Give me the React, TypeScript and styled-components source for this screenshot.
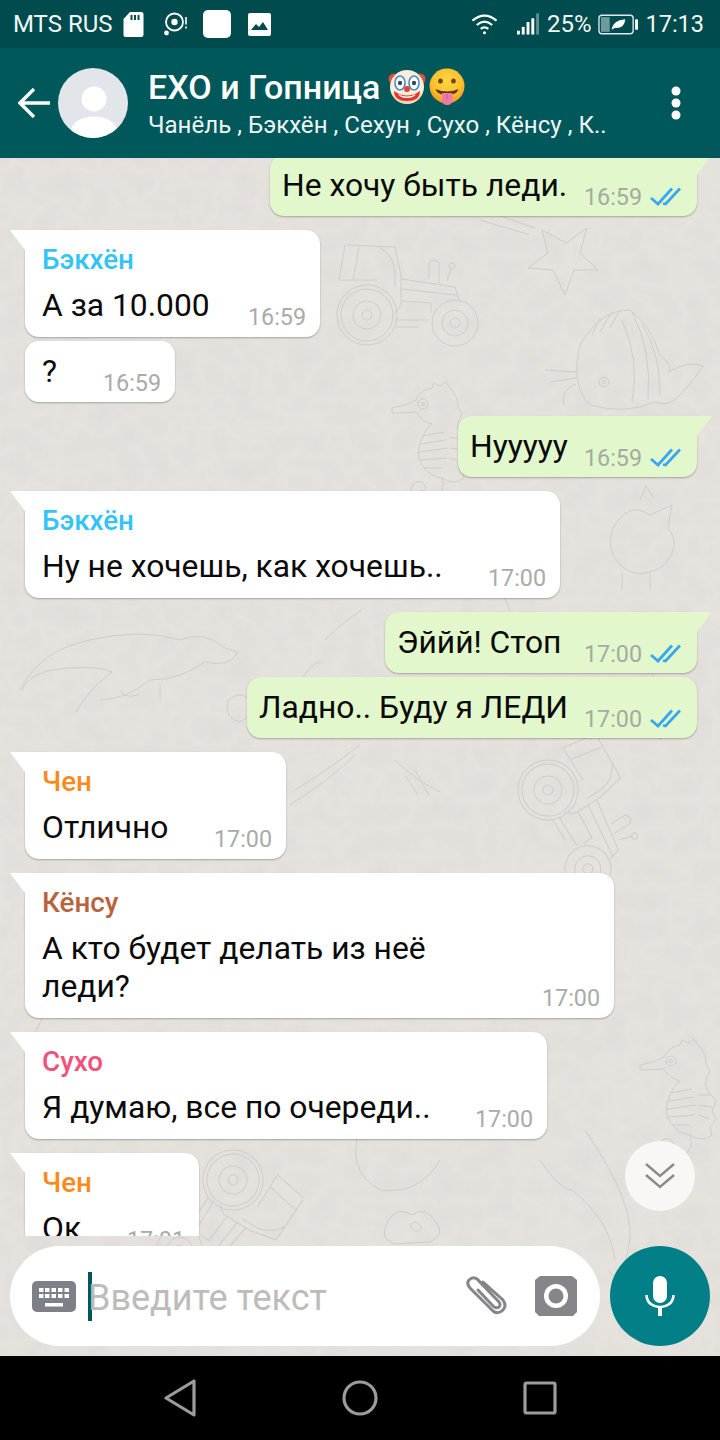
import React from 'react';
import styled, { createGlobalStyle } from 'styled-components';

const GlobalStyle = createGlobalStyle`
  html, body {
    margin: 0;
    padding: 0;
    background: #000;
  }
  * {
    box-sizing: border-box;
  }
`

const Phone = styled.div`
  width: 720px;
  height: 1440px;
  display: flex;
  flex-direction: column;
  overflow: hidden;
  font-family: Roboto, "Noto Sans", sans-serif;
`

const StatusBar = styled.div`
  height: 48px;
  flex: none;
  padding: 0 16px 0 13px;
  display: flex;
  align-items: center;
  background: #004b4d;
  color: #f2f7f7;
  font-size: 24px;
`

const StatusGroup = styled.div`
  display: flex;
  align-items: center;
`

const Spacer = styled.div`
  flex: 1;
`

const Header = styled.div`
  height: 110px;
  flex: none;
  padding: 0 39px 0 18px;
  display: flex;
  align-items: center;
  background: #00585a;
  color: #fff;
`

const Avatar = styled.div`
  width: 70px;
  height: 70px;
  flex: none;
  margin-left: 8px;
  border-radius: 50%;
  overflow: hidden;
  background: #e2e5ea;
`

const HeaderText = styled.div`
  margin-left: 20px;
  flex: 1;
  min-width: 0;
`

const Title = styled.div`
  display: flex;
  align-items: center;
  height: 44px;
  margin-top: -1px;
  font-size: 34px;
  font-weight: 500;
  white-space: nowrap;

  svg {
    flex: none;
  }
`

const Subtitle = styled.div`
  margin-top: 1px;
  font-size: 24.1px;
  line-height: 30px;
  color: #eef5f5;
  white-space: nowrap;
`

const ChatArea = styled.div`
  position: relative;
  flex: 1;
  min-height: 0;
  display: flex;
  flex-direction: column;
  background: #e6e2de;
`

const Wallpaper = styled.svg`
  position: absolute;
  left: 0;
  top: 0;
`

const MessageList = styled.div`
  position: relative;
  height: 1078px;
  flex: none;
  overflow: hidden;
  display: flex;
  flex-direction: column;
  padding: 0 23px 0 25px;
`

const Bubble = styled.div<{ $out?: boolean; $tail?: boolean; $named?: boolean; $width: number; $gap?: number }>`
  position: relative;
  flex: none;
  width: ${p => p.$width}px;
  margin-top: ${p => p.$gap ?? 14}px;
  align-self: ${p => (p.$out ? 'flex-end' : 'flex-start')};
  padding: ${p => (p.$named ? '14px 14px 13px 17px' : p.$out ? '11px 16px 12px 12px' : '11px 14px 12px 17px')};
  background: ${p => (p.$out ? '#e2f7cb' : '#fff')};
  border-radius: ${p => (!p.$tail ? '14px' : p.$out ? '14px 0 14px 14px' : '0 14px 14px 14px')};
  box-shadow: 0 1px 2px rgba(0, 0, 0, 0.28);

  &::before {
    content: '';
    display: ${p => (p.$tail ? 'block' : 'none')};
    position: absolute;
    top: 0;
    ${p => (p.$out ? 'right: -15px;' : 'left: -15px;')}
    width: 15px;
    height: 20px;
    background: ${p => (p.$out ? '#e2f7cb' : '#fff')};
    clip-path: ${p => (p.$out ? 'polygon(0 0, 100% 0, 0 100%)' : 'polygon(0 0, 100% 0, 100% 100%)')};
  }
`

const SenderName = styled.div<{ $color: string }>`
  height: 30px;
  margin-bottom: 12px;
  font-size: 27.8px;
  line-height: 32px;
  font-weight: 500;
  color: ${p => p.$color};
`

const BubbleBody = styled.div`
  display: flex;
  align-items: flex-end;
  justify-content: space-between;
`

const MessageText = styled.div`
  font-size: 31.8px;
  line-height: 38px;
  color: #0a0a0a;
`

const Meta = styled.div<{ $out?: boolean }>`
  flex: none;
  display: flex;
  align-items: center;
  height: 28px;
  margin-bottom: -7px;
  font-size: 23.3px;
  color: ${p => (p.$out ? '#a2aca0' : '#a9abab')};
`

const Ticks = styled.svg`
  margin-left: 8px;
  margin-top: -2px;
`

const ScrollDown = styled.div`
  position: absolute;
  left: 625px;
  top: 983px;
  width: 70px;
  height: 70px;
  border-radius: 50%;
  display: flex;
  align-items: center;
  justify-content: center;
  background: #faf6f5;
`

const Composer = styled.div`
  position: relative;
  flex: none;
  display: flex;
  gap: 10px;
  padding: 10px;
`

const InputPill = styled.div`
  width: 590px;
  height: 100px;
  flex: none;
  padding: 0 23px 0 22px;
  display: flex;
  align-items: center;
  border-radius: 50px;
  background: #fff;
`

const Caret = styled.div`
  width: 4px;
  height: 49px;
  flex: none;
  margin: 0 -4px 0 12px;
  background: #00585a;
`

const Placeholder = styled.div`
  flex: 1;
  padding-top: 3px;
  font-size: 36px;
  color: #bebbbb;
  white-space: nowrap;
`

const MicButton = styled.div`
  width: 100px;
  height: 100px;
  flex: none;
  border-radius: 50%;
  display: flex;
  align-items: center;
  justify-content: center;
  background: #008086;
`

const NavBar = styled.div`
  height: 84px;
  flex: none;
  display: flex;
  align-items: center;
  justify-content: space-between;
  padding: 0 163px;
  background: #000;
`

const ClownEmoji = () => (
  <svg width="38" height="36" viewBox="0 0 38 36" style={{ marginLeft: 8 }}>
    <circle cx="6" cy="10" r="5.5" fill="#e2503a" />
    <circle cx="32" cy="10" r="5.5" fill="#e2503a" />
    <circle cx="19" cy="18" r="17" fill="#fbeedb" />
    <path d="M3 22 Q6 34 19 35 Q32 34 35 22 Q30 30 19 30 Q8 30 3 22Z" fill="#f3c89a" opacity="0.6" />
    <ellipse cx="12" cy="14" rx="5" ry="7" fill="#fff" stroke="#4c8ccc" strokeWidth="1.6" />
    <ellipse cx="26" cy="14" rx="5" ry="7" fill="#fff" stroke="#4c8ccc" strokeWidth="1.6" />
    <circle cx="12" cy="14" r="2.2" fill="#35495f" />
    <circle cx="26" cy="14" r="2.2" fill="#35495f" />
    <circle cx="19" cy="20" r="3" fill="#e8402c" />
    <path d="M6 22 Q19 31 32 22 Q32 32 19 32 Q6 32 6 22Z" fill="#e5352b" />
    <path d="M10 25 Q19 30 28 25 Q26 29 19 29 Q12 29 10 25Z" fill="#fff" />
  </svg>
)

const TongueEmoji = () => (
  <svg width="36" height="38" viewBox="0 0 36 38" style={{ marginLeft: 3 }}>
    <defs>
      <radialGradient id="faceFill" cx="0.5" cy="0.35" r="0.7">
        <stop offset="0" stopColor="#fed53f" />
        <stop offset="0.6" stopColor="#fcc02f" />
        <stop offset="1" stopColor="#ef8f1a" />
      </radialGradient>
    </defs>
    <circle cx="18" cy="18" r="17.5" fill="url(#faceFill)" />
    <ellipse cx="11.5" cy="13" rx="2.3" ry="2.6" fill="#70421a" />
    <ellipse cx="24.5" cy="13" rx="2.3" ry="2.6" fill="#70421a" />
    <path d="M6.5 21 Q18 26 29.5 21 Q28 27 18 27 Q8 27 6.5 21Z" fill="#5b3512" />
    <path d="M13 25 H23.5 V31 Q23.5 37 18 37 Q13 37 13 31Z" fill="#ef7aa8" />
    <path d="M18 26 V31" stroke="#d0528a" strokeWidth="1" />
  </svg>
)

const DoubleTicks = () => (
  <Ticks width="31" height="19" viewBox="0 0 31 19" fill="none" stroke="#38a8ec" strokeWidth="2.8">
    <path d="M1 11 L8 17 L22 1.5" />
    <path d="M13 16.5 L15.5 17 L30 1.5" />
  </Ticks>
)

// big wheel sits at the origin, front of the tractor points along +x
const Tractor = ({ at }: { at: string }) => (
  <g transform={at}>
    <circle r="30" />
    <circle r="26" />
    <circle r="14" />
    <circle r="5" />
    <circle cx="88" cy="8" r="23" />
    <circle cx="88" cy="8" r="13" />
    <circle cx="88" cy="8" r="5" />
    <path d="M-20 -70 L28 -68 L34 -40 L34 -10 M-22 -70 L-28 -35 M-8 -68 L-14 -35 M12 -68 Q28 -60 28 -40 L28 -28 M-28 -35 L10 -35" />
    <path d="M34 -36 L88 -28 L92 -15 M34 -26 L90 -20 M34 -14 L64 -12 V-2 M28 5 L62 5 M28 -2 L34 -10 M28 12 H52" />
    <path d="M62 -36 V-52 Q68 -58 72 -52 V-32 M80 -34 L84 -47" />
    <circle cx="85" cy="-49" r="3" />
  </g>
)

const Seahorse = ({ at }: { at: string }) => (
  <g transform={at}>
    <path d="M0 0 Q14 -2 24 -8 Q28 -18 40 -20 L42 -25 L48 -22 L54 -26 L58 -20 Q66 -12 66 -2 L70 6 L66 14 Q64 20 68 26 L76 36 L72 46 L76 54 L70 62 L72 70 Q62 78 50 70 Q54 84 44 90 Q30 96 22 88 Q16 78 24 74 Q32 72 34 80 Q32 84 28 82" />
    <path d="M0 0 L0 5 Q14 5 24 4 Q30 14 40 16 Q28 26 26 46 Q28 60 42 68 L50 70" />
    <circle cx="31" cy="-4" r="5" />
    <circle cx="31" cy="-4" r="1.6" />
    <path d="M30 28 L52 24 M28 36 L54 32 M27 44 L56 40 M28 52 L54 50 M32 60 L50 60 M58 30 L70 30 M58 40 L72 42 M58 50 L70 54" />
  </g>
)

const Fish = () => (
  <g>
    <path d="M580 345 Q600 310 630 310 Q650 325 660 355 Q675 368 668 372 Q690 360 703 366 Q690 385 680 395 Q668 408 655 402 Q625 415 590 405 Q570 385 580 345Z" />
    <path d="M592 335 L600 318 M600 332 L612 312 M610 328 L620 310 M576 372 L545 370 M576 378 L550 382 M576 384 Q560 390 564 405" />
    <path d="M632 312 Q652 350 648 400 M642 325 Q660 350 660 395 M622 320 Q640 360 632 402" />
    <circle cx="604" cy="382" r="5" />
    <circle cx="604" cy="382" r="2" />
  </g>
)

// faint line drawings of the chat wallpaper, over a mottled paper texture
const ChatWallpaper = () => (
  <Wallpaper width="720" height="1198" viewBox="0 158 720 1198">
    <defs>
      <filter id="paper" x="0" y="0" width="100%" height="100%">
        <feTurbulence type="turbulence" baseFrequency="0.035" numOctaves="3" seed="11" />
        <feColorMatrix values="0 0 0 0 0.7  0 0 0 0 0.67  0 0 0 0 0.65  1.1 0 0 0 -0.02" />
        <feComponentTransfer>
          <feFuncA type="linear" slope="0.5" />
        </feComponentTransfer>
      </filter>
    </defs>
    <rect x="0" y="158" width="720" height="1198" filter="url(#paper)" />
    <g fill="none" stroke="#d0ccc8" strokeWidth="1">
      <path d="M587 228 L566 243 L542 230 L548 253 L528 268 L553 270 L565 295 L574 270 L598 270 L580 253Z" />
      <path d="M480 220 L530 235 M500 216 L535 228" />
      <Tractor at="translate(367 315)" />
      <Tractor at="translate(548 790) rotate(58)" />
      <Tractor at="translate(233 1180) rotate(122)" />
      <Seahorse at="translate(392 408)" />
      <Seahorse at="translate(640 1065)" />
      <Fish />
      <path d="M612 530 Q628 500 650 515 L672 505 L668 528 Q682 545 664 565 Q640 582 620 565 Q606 550 612 530Z" />
      <path d="M640 500 L646 486 L654 498 M622 572 V590 M650 574 V590" />
      <path d="M20 690 Q40 650 90 640 Q140 628 180 640 Q205 630 225 648 L238 652 Q230 668 205 662 Q180 680 150 680 Q125 700 100 700 M22 690 Q30 670 70 668 Q100 666 112 672 Q88 690 76 712 M120 690 Q125 700 140 694 M160 684 V700" />
      <path d="M295 690 Q312 660 322 662 M325 640 Q345 620 362 610 M228 700 Q240 690 250 700 Q256 715 240 722 Q224 720 228 700Z" />
      <path d="M290 805 Q330 780 355 755 M295 790 Q325 772 360 745 M395 760 Q415 780 440 792 M405 775 L418 795 M415 770 L430 797" />
      <path d="M640 660 Q680 700 660 740 M500 590 Q520 620 505 650" />
      <path d="M585 1130 Q640 1210 628 1250 Q620 1290 608 1270 M540 1160 Q560 1190 572 1190 Q610 1220 615 1260" />
      <path d="M386 1225 Q395 1205 412 1215 Q425 1205 436 1222 Q446 1235 430 1242 L395 1244 Q380 1240 386 1225Z" />
      <path d="M410 1225 Q416 1218 422 1228 Q416 1236 410 1225" />
      <path d="M360 1130 Q345 1170 380 1190 Q420 1195 440 1160 M30 960 Q60 1000 30 1040" />
    </g>
  </Wallpaper>
)

interface MessageProps {
  out?: boolean
  tail?: boolean
  width: number
  gap?: number
  name?: string
  color?: string
  time: string
  children: React.ReactNode
}

const Message = ({ out, tail, width, gap, name, color, time, children }: MessageProps) => (
  <Bubble $out={out} $tail={tail} $width={width} $gap={gap} $named={!!name}>
    {name && <SenderName $color={color || '#000'}>{name}</SenderName>}
    <BubbleBody>
      <MessageText>{children}</MessageText>
      <Meta $out={out}>
        {time}
        {out && <DoubleTicks />}
      </Meta>
    </BubbleBody>
  </Bubble>
)

const App: React.FC = () => {
  return (
    <Phone>
      <GlobalStyle />
      <StatusBar>
        <StatusGroup>
          MTS RUS
          <svg width="21" height="25" viewBox="0 0 21 25" style={{ marginLeft: 10 }}>
            <path d="M7 0 H18 Q20.5 0 20.5 2 V23 Q20.5 25 18 25 H2.5 Q0.5 25 0.5 23 V7Z" fill="#fff" />
            <path d="M8.5 3 V8 M12 3 V8 M15.5 3 V8" stroke="#004b4d" strokeWidth="2" />
          </svg>
          <svg width="24" height="24" viewBox="0 0 24 24" style={{ marginLeft: 20 }}>
            <circle cx="10.5" cy="10" r="8.5" fill="none" stroke="#fff" strokeWidth="1.8" />
            <circle cx="10.5" cy="10" r="3.2" fill="#fff" />
            <circle cx="2.5" cy="21" r="2.4" fill="#fff" />
            <path d="M22 5 V12.5 M22 14.5 V16.5" stroke="#fff" strokeWidth="1.6" />
          </svg>
          <svg width="28" height="28" viewBox="0 0 28 28" style={{ marginLeft: 15 }}>
            <rect width="28" height="28" rx="5" fill="#fff" />
          </svg>
          <svg width="23" height="23" viewBox="0 0 23 23" style={{ marginLeft: 17 }}>
            <rect width="23" height="23" rx="2" fill="#fff" />
            <path d="M3 17 L8 11 L11 14 L15 9 L20 17Z" fill="#004b4d" />
          </svg>
        </StatusGroup>
        <Spacer />
        <StatusGroup>
          <svg width="27" height="22" viewBox="0 0 28 22" fill="none" stroke="#fff" strokeWidth="2.2">
            <path d="M1.5 7.5 Q14 -3 26.5 7.5" />
            <path d="M6 12 Q14 5 22 12" />
            <path d="M10 16 Q14 13 18 16" />
            <circle cx="14" cy="20" r="1.6" fill="#fff" stroke="none" />
          </svg>
          <svg width="22" height="22" viewBox="0 0 23 22" style={{ marginLeft: 19 }}>
            <rect x="0" y="18" width="3" height="4" fill="#fff" />
            <rect x="5" y="14" width="3" height="8" fill="#fff" />
            <rect x="10" y="9" width="3" height="13" fill="#fff" />
            <rect x="15" y="5" width="3" height="17" fill="#fff" />
            <rect x="20" y="0" width="3" height="22" fill="#5d8f90" />
          </svg>
          <span style={{ marginLeft: 8 }}>25%</span>
          <svg width="41" height="21" viewBox="0 0 42 21" style={{ marginLeft: 7 }}>
            <rect x="1" y="1" width="35" height="19" rx="3" fill="none" stroke="#dfe9e9" strokeWidth="1.4" />
            <rect x="3" y="3" width="9" height="15" fill="#6f9a9b" />
            <rect x="38" y="5" width="3" height="11" rx="1" fill="#fff" />
            <path d="M14 16 Q15 6 28 5 Q27 15 17 14Z" fill="#fff" />
          </svg>
          <span style={{ marginLeft: 6, fontSize: 23.5 }}>17:13</span>
        </StatusGroup>
      </StatusBar>

      <Header>
        <svg width="32" height="30" viewBox="0 0 32 30" fill="none" stroke="#fff" strokeWidth="3.4">
          <path d="M32 15 H3 M16 1 L2 15 L16 29" />
        </svg>
        <Avatar>
          <svg width="70" height="70" viewBox="0 0 70 70">
            <circle cx="36" cy="31" r="12.5" fill="#fff" />
            <ellipse cx="36" cy="63" rx="23" ry="14.5" fill="#fff" />
          </svg>
        </Avatar>
        <HeaderText>
          <Title>
            EXO и Гопница
            <ClownEmoji />
            <TongueEmoji />
          </Title>
          <Subtitle>Чанёль , Бэкхён , Сехун , Сухо , Кёнсу , К..</Subtitle>
        </HeaderText>
        <svg width="10" height="34" viewBox="0 0 10 34" fill="#fff">
          <circle cx="5" cy="5" r="4.5" />
          <circle cx="5" cy="17" r="4.5" />
          <circle cx="5" cy="29" r="4.5" />
        </svg>
      </Header>

      <ChatArea>
        <ChatWallpaper />
        <MessageList>
          <Message out tail width={427} gap={-3} time="16:59">Не хочу быть леди.</Message>
          <Message tail width={295} name="Бэкхён" color="#33c3f7" time="16:59">А за 10.000</Message>
          <Message width={150} gap={4} time="16:59">?</Message>
          <Message out tail width={239} time="16:59">Нууууу</Message>
          <Message tail width={535} name="Бэкхён" color="#33c3f7" time="17:00">Ну не хочешь, как хочешь..</Message>
          <Message out tail width={312} time="17:00">Эййй! Стоп</Message>
          <Message out width={450} gap={4} time="17:00">Ладно.. Буду я ЛЕДИ</Message>
          <Message tail width={261} name="Чен" color="#fb8a1e" time="17:00">Отлично</Message>
          <Message tail width={589} name="Кёнсу" color="#b8633e" time="17:00">А кто будет делать из неё<br />леди?</Message>
          <Message tail width={522} name="Сухо" color="#f0527c" time="17:00">Я думаю, все по очереди..</Message>
          <Message tail width={174} name="Чен" color="#fb8a1e" time="17:01">Ок</Message>
        </MessageList>

        <ScrollDown>
          <svg width="32" height="28" viewBox="0 0 32 28" fill="none" stroke="#8a8a8a" strokeWidth="2.4">
            <path d="M2 2 L16 14 L30 2" />
            <path d="M2 13 L16 25 L30 13" />
          </svg>
        </ScrollDown>

        <Composer>
          <InputPill>
            <svg width="44" height="31" viewBox="0 0 44 31">
              <rect width="44" height="31" rx="5" fill="#7d8086" />
              <g fill="#fff">
                <rect x="7" y="7" width="4.5" height="4" />
                <rect x="13" y="7" width="4.5" height="4" />
                <rect x="19.5" y="7" width="4.5" height="4" />
                <rect x="26" y="7" width="4.5" height="4" />
                <rect x="32.5" y="7" width="4.5" height="4" />
                <rect x="7" y="13" width="4.5" height="4" />
                <rect x="13" y="13" width="4.5" height="4" />
                <rect x="19.5" y="13" width="4.5" height="4" />
                <rect x="26" y="13" width="4.5" height="4" />
                <rect x="32.5" y="13" width="4.5" height="4" />
                <rect x="13" y="22" width="18" height="3.5" />
              </g>
            </svg>
            <Caret />
            <Placeholder>Введите текст</Placeholder>
            <svg width="44" height="40" viewBox="0 0 44 40" fill="none" stroke="#85858a" strokeWidth="3" strokeLinecap="round">
              <path d="M18 6 L38 24 Q42 30 38 34 Q33 39 28 35 L5 12 Q1 7 4 4 Q8 0 12 3 L34 26 Q36 29 34 31 Q31 33 28 30 L13 14" />
            </svg>
            <svg width="42" height="40" viewBox="0 0 42 40" style={{ marginLeft: 26 }}>
              <path d="M5 0 H37 L42 4 V36 L38 40 H4 L0 36 V4Z" fill="#85858a" />
              <circle cx="21" cy="20" r="12" fill="#fff" />
              <circle cx="21" cy="20" r="7.5" fill="#85858a" />
            </svg>
          </InputPill>
          <MicButton>
            <svg width="30" height="40" viewBox="0 0 30 40">
              <rect x="8" y="0" width="14" height="27" rx="7" fill="#fff" />
              <path d="M1.5 19 Q2 30 15 31 Q28 30 28.5 19" fill="none" stroke="#fff" strokeWidth="2.6" />
              <rect x="13" y="31" width="4" height="9" fill="#fff" />
            </svg>
          </MicButton>
        </Composer>
      </ChatArea>

      <NavBar>
        <svg width="34" height="38" viewBox="0 0 34 38" fill="none" stroke="#9c9c9c" strokeWidth="3.2" strokeLinejoin="round">
          <path d="M31 2 V36 L3 19Z" />
        </svg>
        <svg width="36" height="36" viewBox="0 0 36 36" fill="none" stroke="#9c9c9c" strokeWidth="3.2">
          <circle cx="18" cy="18" r="16" />
        </svg>
        <svg width="34" height="34" viewBox="0 0 34 34" fill="none" stroke="#9c9c9c" strokeWidth="3.2" strokeLinejoin="round">
          <rect x="2" y="2" width="30" height="30" rx="1.5" />
        </svg>
      </NavBar>
    </Phone>
  );
}

export default App;
